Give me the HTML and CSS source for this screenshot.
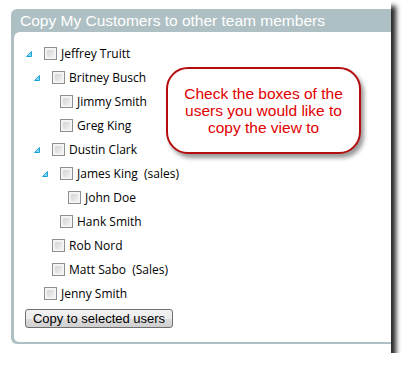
FILE: index.html
```html
<!DOCTYPE html>
<html lang="en">
<head>
    <meta charset="UTF-8">
    <meta name="viewport" content="width=device-width, initial-scale=1.0">
    <title>Copy view</title>
    <link rel="stylesheet" href="styles.css">
</head>
<body>
    <div class="shot">
        <div class="panel">
            <div class="panel-title">Copy My Customers to other team members</div>
            <div class="panel-body">
                <ul class="tree">
                    <li>
                        <div class="node open"><span class="toggle"><svg width="6" height="6" viewBox="0 0 6 6"><path d="M5.5 0.5 L5.5 5.5 L0.5 5.5 Z" fill="#8fd3f2" stroke="#1ba1e2" stroke-width="1"/></svg></span><span class="box"></span><span class="label">Jeffrey Truitt</span></div>
                        <ul>
                            <li>
                                <div class="node open"><span class="toggle"><svg width="6" height="6" viewBox="0 0 6 6"><path d="M5.5 0.5 L5.5 5.5 L0.5 5.5 Z" fill="#8fd3f2" stroke="#1ba1e2" stroke-width="1"/></svg></span><span class="box"></span><span class="label">Britney Busch</span></div>
                                <ul>
                                    <li><div class="node"><span class="toggle"></span><span class="box"></span><span class="label">Jimmy Smith</span></div></li>
                                    <li><div class="node"><span class="toggle"></span><span class="box"></span><span class="label">Greg King</span></div></li>
                                </ul>
                            </li>
                            <li>
                                <div class="node open"><span class="toggle"><svg width="6" height="6" viewBox="0 0 6 6"><path d="M5.5 0.5 L5.5 5.5 L0.5 5.5 Z" fill="#8fd3f2" stroke="#1ba1e2" stroke-width="1"/></svg></span><span class="box"></span><span class="label">Dustin Clark</span></div>
                                <ul>
                                    <li>
                                        <div class="node open"><span class="toggle"><svg width="6" height="6" viewBox="0 0 6 6"><path d="M5.5 0.5 L5.5 5.5 L0.5 5.5 Z" fill="#8fd3f2" stroke="#1ba1e2" stroke-width="1"/></svg></span><span class="box"></span><span class="label">James King&nbsp; (sales)</span></div>
                                        <ul>
                                            <li><div class="node"><span class="toggle"></span><span class="box"></span><span class="label">John Doe</span></div></li>
                                        </ul>
                                    </li>
                                    <li><div class="node"><span class="toggle"></span><span class="box"></span><span class="label">Hank Smith</span></div></li>
                                </ul>
                            </li>
                            <li><div class="node"><span class="toggle"></span><span class="box"></span><span class="label">Rob Nord</span></div></li>
                            <li><div class="node"><span class="toggle"></span><span class="box"></span><span class="label">Matt Sabo&nbsp; (Sales)</span></div></li>
                        </ul>
                    </li>
                    <li><div class="node"><span class="toggle"></span><span class="box"></span><span class="label">Jenny Smith</span></div></li>
                </ul>
                <button class="copy-btn">Copy to selected users</button>
            </div>
        </div>
        <div class="callout">Check the boxes of the users you would like to copy the view to</div>
    </div>
</body>
</html>
```

FILE: styles.css
```css
html,
body {
    margin: 0;
    padding: 0;
    background: #fff;
}

body {
    font-family: "Liberation Sans", Arial, sans-serif;
}

.shot {
    position: relative;
    width: 391px;
    height: 353px;
    background: #fff;
    overflow: hidden;
    box-shadow: 5px 6px 5px rgba(0, 0, 0, 0.85);
    padding: 9px 0 0 11px;
    box-sizing: border-box;
}

.panel {
    width: 400px;
    height: 335px;
    background: #aec0c4;
    border-radius: 6px 0 0 6px;
    padding: 0 0 2px 3px;
    box-sizing: border-box;
    display: flex;
    flex-direction: column;
}

.panel-title {
    height: 23px;
    line-height: 23px;
    padding-left: 6px;
    color: #fff;
    font-size: 15.5px;
    white-space: nowrap;
}

.panel-body {
    flex: 1;
    background: #fff;
    border-radius: 6px 0 0 5px;
    padding: 9px 0 0 11px;
}

.tree,
.tree ul {
    list-style: none;
    margin: 0;
    padding: 0;
}

.tree {
    padding-left: 1px;
}

.tree ul {
    padding-left: 8px;
}

.node {
    display: flex;
    align-items: center;
    height: 24px;
    font-family: "Open Sans", "Noto Sans", sans-serif;
    font-size: 12px;
    color: #000;
}

.toggle {
    width: 18px;
    height: 6px;
    display: flex;
    padding-top: 2px;
}

.box {
    width: 11px;
    height: 11px;
    border: 1px solid #8e8f8f;
    background: linear-gradient(135deg, #cfcfcf, #f4f4f4);
    box-shadow: inset 0 0 0 2px #f4f4f4;
    margin-right: 4px;
}

.copy-btn {
    margin-top: 4px;
    width: 148px;
    height: 19px;
    padding: 0;
    border: 1px solid #707070;
    border-radius: 3px;
    background: linear-gradient(#f2f2f2 0%, #ebebeb 50%, #dddddd 51%, #cfcfcf 100%);
    font-family: "Liberation Sans", Arial, sans-serif;
    font-size: 13px;
    color: #000;
}

.callout {
    position: absolute;
    left: 166px;
    top: 67px;
    width: 195px;
    height: 87px;
    box-sizing: border-box;
    border: 2px solid #b50d0d;
    border-radius: 22px;
    background: #fff;
    box-shadow: 3px 4px 4px rgba(0, 0, 0, 0.4);
    color: #e00000;
    font-size: 15.5px;
    line-height: 17px;
    text-align: center;
    display: flex;
    align-items: center;
    justify-content: center;
    padding: 0 10px;
}
```
